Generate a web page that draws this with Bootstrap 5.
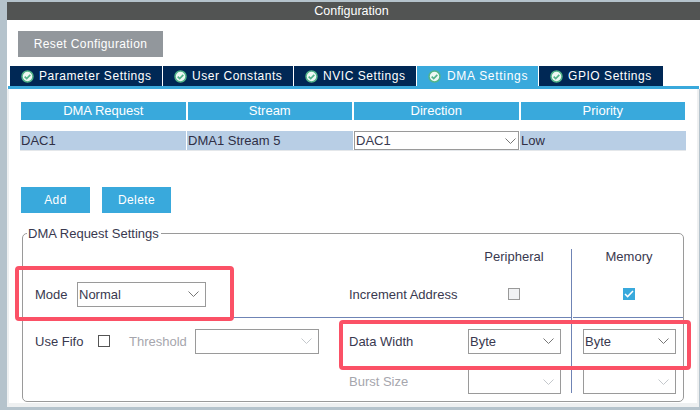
<!DOCTYPE html>
<html lang="en"><head><meta charset="utf-8"><title>Configuration</title>
<link href="https://cdn.jsdelivr.net/npm/bootstrap@5.3.0/dist/css/bootstrap.min.css" rel="stylesheet">
<style>
html,body{height:100%;overflow:hidden}
body{background:#b5c3cc;font:13px "Liberation Sans",Arial,sans-serif;color:#39394f;padding:2px 0 0 7px;position:relative}
.cfg-title{background:#525453;color:#fff;height:18px;line-height:18px;text-align:center;font-size:12.5px;padding-right:4px}
.cfg-top{background:#fff;height:69px;padding-top:11px}
.cfg-btn{border:0;border-radius:0;color:#fff;font-size:12px;letter-spacing:.4px;height:26px;padding:0;display:block}
.cfg-reset{background:#92979c;width:145px;margin-left:11px}
.cfg-tabs{margin:9px 1px 0;height:23px;border-bottom:3px solid #39a9dc;padding-left:2px}
.cfg-tab{background:#002855;color:#fff;height:20px;font-size:12px;letter-spacing:.55px;border-right:1px solid #fff;gap:5px;padding-left:11px;white-space:nowrap;flex:none}
.cfg-tab.on{background:#39a9dc;letter-spacing:.7px;gap:6px}
.cfg-tab svg{flex:none}
.cfg-t1{width:153px}.cfg-t2{width:131px}.cfg-t3{width:123px}.cfg-t4{width:122px}.cfg-t5{width:124px;border-right:0}
.cfg-pane{width:692px;height:318px;background:#fff;border:solid #eef0f1;border-width:0 2px 4px;padding:13px 11px 0}
.cfg-head{margin:0 1px;gap:2px}
.cfg-head>div{background:#39a9dc;color:#fff;height:18px;line-height:18px;text-align:center;flex:1 1 0}
.cfg-row{margin-top:11px;gap:1px;height:20px;border-bottom:1px solid #e4e7ea}
.cfg-row>div{background:#b8cee5;flex:1 1 0;height:19px;line-height:19px;color:#2f2f45;padding-left:1px}
.cfg-row>div.cfg-cellsel{padding:0}
.cfg-sel{border:1px solid #9a9a9a;background:#fff;height:25px;width:129px;padding:0 6px 0 1px;color:#39394f;display:flex;justify-content:space-between;align-items:center;flex:none}
.cfg-row .cfg-sel{height:19px;width:100%;padding:0 2px 0 1px}
.cfg-acts{margin:36px 0 0 1px;gap:12px}
.cfg-blue{background:#39a9dc;width:69px}
fieldset.cfg-set{border:1px solid #9a9a9a;border-radius:5px;margin:13px 2px 0;padding:0;height:176px;position:relative}
fieldset.cfg-set legend{float:none;width:auto;font-size:13px;line-height:15px;margin:0 0 0 4px;padding:0 2px 0 1px}
.cfg-line1{height:30px;padding-left:435px;align-items:center}
.cfg-cap{text-align:center}
.cfg-p{width:112px}
.cfg-m{width:113px;padding-left:5px}
.cfg-line2{height:47px;align-items:center;padding-left:12px;border-bottom:1px solid #6f84b5}
.cfg-line3{height:46px;align-items:center;padding-left:12px}
.cfg-line4{height:30px;padding-top:5px;align-items:center;padding-left:326px}
.cfg-off{color:#a6a6ad}
.cfg-l{flex:none}
.cfg-box{width:12px;height:12px;border:1px solid #555;background:#fff;flex:none}
.cfg-box.gray{border-color:#999;background:#f0f1f3}
.cfg-box.chk{background:#39a9dc;border:0;display:flex;align-items:center;justify-content:center}
.cfg-w42{width:42px}.cfg-inc{margin-left:143px;width:159px}.cfg-mem{margin-left:103px}
.cfg-w63{width:63px}.cfg-thr{margin-left:19px;width:66px}.cfg-w124{width:124px}
.cfg-dw{margin-left:30px;width:119px}.cfg-bw{width:119px}.cfg-w93{width:93px}.cfg-ml22{margin-left:22px}
.cfg-vline{position:absolute;left:548px;top:8px;height:144px;border-left:1px solid #6f84b5}
.cfg-gap{position:absolute;left:549px;top:76px;width:1px;height:1px;background:#fff}
.cfg-mark{position:absolute;border:4px solid #fb5166;border-radius:4px}
.cfg-m1{left:15px;top:266px;width:219px;height:55px}
.cfg-m2{left:339px;top:320px;width:352px;height:50px}
</style></head><body>
<div class="cfg-title">Configuration</div>
<div class="cfg-top">
<button class="cfg-btn cfg-reset" type="button">Reset Configuration</button>
<div class="cfg-tabs d-flex">
<div class="cfg-tab cfg-t1 d-flex align-items-center"><svg width="13" height="13" viewBox="0 0 13 13"><circle cx="6.5" cy="6.5" r="5.5" fill="#eef8f3" stroke="#52b48a" stroke-width="1.5"/><path d="M3.7 6.6l2 2 3.6-3.7" fill="none" stroke="#52b48a" stroke-width="1.7"/></svg>Parameter Settings</div>
<div class="cfg-tab cfg-t2 d-flex align-items-center"><svg width="13" height="13" viewBox="0 0 13 13"><circle cx="6.5" cy="6.5" r="5.5" fill="#eef8f3" stroke="#52b48a" stroke-width="1.5"/><path d="M3.7 6.6l2 2 3.6-3.7" fill="none" stroke="#52b48a" stroke-width="1.7"/></svg>User Constants</div>
<div class="cfg-tab cfg-t3 d-flex align-items-center"><svg width="13" height="13" viewBox="0 0 13 13"><circle cx="6.5" cy="6.5" r="5.5" fill="#eef8f3" stroke="#52b48a" stroke-width="1.5"/><path d="M3.7 6.6l2 2 3.6-3.7" fill="none" stroke="#52b48a" stroke-width="1.7"/></svg>NVIC Settings</div>
<div class="cfg-tab cfg-t4 on d-flex align-items-center"><svg width="13" height="13" viewBox="0 0 13 13"><circle cx="6.5" cy="6.5" r="5.5" fill="#eef8f3" stroke="#52b48a" stroke-width="1.5"/><path d="M3.7 6.6l2 2 3.6-3.7" fill="none" stroke="#52b48a" stroke-width="1.7"/></svg>DMA Settings</div>
<div class="cfg-tab cfg-t5 d-flex align-items-center"><svg width="13" height="13" viewBox="0 0 13 13"><circle cx="6.5" cy="6.5" r="5.5" fill="#eef8f3" stroke="#52b48a" stroke-width="1.5"/><path d="M3.7 6.6l2 2 3.6-3.7" fill="none" stroke="#52b48a" stroke-width="1.7"/></svg>GPIO Settings</div>
</div>
</div>
<div class="cfg-pane">
<div class="cfg-head d-flex"><div>DMA Request</div><div>Stream</div><div>Direction</div><div>Priority</div></div>
<div class="cfg-row d-flex"><div>DAC1</div><div>DMA1 Stream 5</div><div class="cfg-cellsel"><div class="cfg-sel">DAC1<svg width="11" height="6" viewBox="0 0 11 6"><path d="M.5.5l5 5 5-5" fill="none" stroke="#777"/></svg></div></div><div>Low</div></div>
<div class="cfg-acts d-flex"><button class="cfg-btn cfg-blue" type="button">Add</button><button class="cfg-btn cfg-blue" type="button">Delete</button></div>
<fieldset class="cfg-set">
<legend>DMA Request Settings</legend>
<div class="cfg-line1 d-flex"><div class="cfg-cap cfg-p">Peripheral</div><div class="cfg-cap cfg-m">Memory</div></div>
<div class="cfg-line2 d-flex"><span class="cfg-l cfg-w42">Mode</span><div class="cfg-sel">Normal<svg width="11" height="6" viewBox="0 0 11 6"><path d="M.5.5l5 5 5-5" fill="none" stroke="#777"/></svg></div><span class="cfg-l cfg-inc">Increment Address</span><span class="cfg-box gray"></span><span class="cfg-box chk cfg-mem"><svg width="10" height="8" viewBox="0 0 10 8"><path d="M1 4l2.6 2.6L9 1" fill="none" stroke="#fff" stroke-width="1.5"/></svg></span></div>
<div class="cfg-line3 d-flex"><span class="cfg-l cfg-w63">Use Fifo</span><span class="cfg-box"></span><span class="cfg-l cfg-off cfg-thr">Threshold</span><div class="cfg-sel cfg-w124"><i></i><svg width="11" height="6" viewBox="0 0 11 6"><path d="M.5.5l5 5 5-5" fill="none" stroke="#c4c8cc"/></svg></div><span class="cfg-l cfg-dw">Data Width</span><div class="cfg-sel cfg-w93">Byte<svg width="11" height="6" viewBox="0 0 11 6"><path d="M.5.5l5 5 5-5" fill="none" stroke="#777"/></svg></div><div class="cfg-sel cfg-w93 cfg-ml22">Byte<svg width="11" height="6" viewBox="0 0 11 6"><path d="M.5.5l5 5 5-5" fill="none" stroke="#777"/></svg></div></div>
<div class="cfg-line4 d-flex"><span class="cfg-l cfg-off cfg-bw">Burst Size</span><div class="cfg-sel cfg-w93"><i></i><svg width="11" height="6" viewBox="0 0 11 6"><path d="M.5.5l5 5 5-5" fill="none" stroke="#c4c8cc"/></svg></div><div class="cfg-sel cfg-w93 cfg-ml22"><i></i><svg width="11" height="6" viewBox="0 0 11 6"><path d="M.5.5l5 5 5-5" fill="none" stroke="#c4c8cc"/></svg></div></div>
<div class="cfg-vline"></div><div class="cfg-gap"></div>
</fieldset>
</div>
<div class="cfg-mark cfg-m1"></div><div class="cfg-mark cfg-m2"></div>
</body></html>
